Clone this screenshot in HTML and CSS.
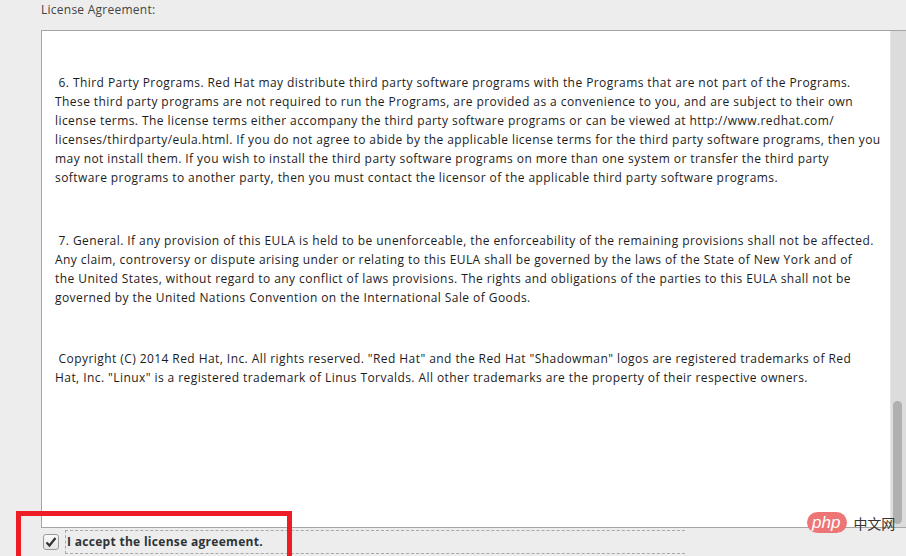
FILE: index.html
```html
<!DOCTYPE html>
<html lang="en">
<head>
    <meta charset="UTF-8">
    <meta name="viewport" content="width=device-width, initial-scale=1.0">
    <link rel="stylesheet" href="styles.css">
</head>
<body>

<div class="page">
    <div class="heading">License Agreement:</div>

    <div class="license-box">
        <div class="license-text">
            <p>
                <span class="line">&nbsp;6. Third Party Programs. Red Hat may distribute third party software programs with the Programs that are not part of the Programs.</span>
                <span class="line">These third party programs are not required to run the Programs, are provided as a convenience to you, and are subject to their own</span>
                <span class="line">license terms. The license terms either accompany the third party software programs or can be viewed at http://www.redhat.com/</span>
                <span class="line">licenses/thirdparty/eula.html. If you do not agree to abide by the applicable license terms for the third party software programs, then you</span>
                <span class="line">may not install them. If you wish to install the third party software programs on more than one system or transfer the third party</span>
                <span class="line">software programs to another party, then you must contact the licensor of the applicable third party software programs.</span>
            </p>
            <p>
                <span class="line">&nbsp;7. General. If any provision of this EULA is held to be unenforceable, the enforceability of the remaining provisions shall not be affected.</span>
                <span class="line">Any claim, controversy or dispute arising under or relating to this EULA shall be governed by the laws of the State of New York and of</span>
                <span class="line">the United States, without regard to any conflict of laws provisions. The rights and obligations of the parties to this EULA shall not be</span>
                <span class="line">governed by the United Nations Convention on the International Sale of Goods.</span>
            </p>
            <p>
                <span class="line">&nbsp;Copyright (C) 2014 Red Hat, Inc. All rights reserved. "Red Hat" and the Red Hat "Shadowman" logos are registered trademarks of Red</span>
                <span class="line">Hat, Inc. "Linux" is a registered trademark of Linus Torvalds. All other trademarks are the property of their respective owners.</span>
            </p>
        </div>
        <div class="scrollbar">
            <div class="thumb"></div>
        </div>
    </div>

    <label class="accept">
        <span class="checkbox">
            <svg width="12" height="12" viewBox="0 0 12 12">
                <path d="M1.5 6.5 L4.5 9.5 L10.5 2" fill="none" stroke="#2e3436" stroke-width="2.2"/>
            </svg>
        </span>
        <span class="accept-label">I accept the license agreement.</span>
    </label>
</div>

<!-- highlight frame around the checkbox -->
<div class="highlight"></div>

<div class="watermark">
    <span class="php">php</span>
    <span class="cn">中文网</span>
</div>

</body>
</html>
```

FILE: styles.css
```css
body {
    margin: 0;
    padding: 0;
    background-color: #ededed;
    font-family: "Open Sans", "Noto Sans", sans-serif;
    color: #2e3436;
    overflow: hidden;
    width: 906px;
    height: 556px;
    position: relative;
}

.page {
    padding: 1px 0 0 41px;
}

.heading {
    font-size: 12px;
    line-height: 18px;
    letter-spacing: 0.25px;
    color: #444;
}

.license-box {
    display: flex;
    margin-top: 11px;
    height: 496px;
    border: 1px solid #a5a5a5;
    border-right: none;
    background-color: #fff;
}

.license-text {
    flex: 1;
    padding: 42px 0 0 13px;
    font-size: 12px;
    line-height: 19px;
    letter-spacing: 0.43px;
    color: #1c1c1c;
}

.license-text p {
    margin: 0 0 44px 0;
}

.license-text p:nth-child(2) {
    margin-bottom: 42px;
}

.line {
    display: block;
    white-space: nowrap;
}

.scrollbar {
    width: 15px;
    background-color: #dcdcdc;
    border-left: 1px solid #e6e6e6;
    position: relative;
}

.thumb {
    position: absolute;
    left: 2px;
    top: 370px;
    width: 9px;
    height: 123px;
    border-radius: 5px;
    background-color: #b0b0b0;
}

.accept {
    display: flex;
    align-items: center;
    gap: 6px;
    margin-top: 2px;
    padding-left: 2px;
}

.checkbox {
    width: 14px;
    height: 14px;
    border: 1px solid #9a9a9a;
    border-radius: 3px;
    background: linear-gradient(#fafafa, #e4e4e4);
    display: flex;
    align-items: center;
    justify-content: center;
}

.accept-label {
    font-size: 12px;
    font-weight: bold;
    letter-spacing: 0.3px;
    color: #2e3436;
    padding: 2px 0 3px 1px;
    border: 1px dashed #a8a8a8;
    border-right: none;
    width: 618px;
}

.highlight {
    position: absolute;
    left: 16px;
    top: 511px;
    width: 266px;
    height: 60px;
    border: 5px solid #ee1c25;
}

.watermark {
    position: absolute;
    left: 807px;
    top: 512px;
    display: flex;
    align-items: center;
    gap: 6px;
}

.php {
    background-color: #ee7575;
    color: #fff;
    font-family: "Liberation Sans", sans-serif;
    font-style: italic;
    font-size: 17px;
    line-height: 21px;
    padding: 0 7px 0 5px;
    border-radius: 11px;
}

.cn {
    font-family: "Noto Sans CJK SC", sans-serif;
    font-size: 14px;
    color: #333;
}
```
